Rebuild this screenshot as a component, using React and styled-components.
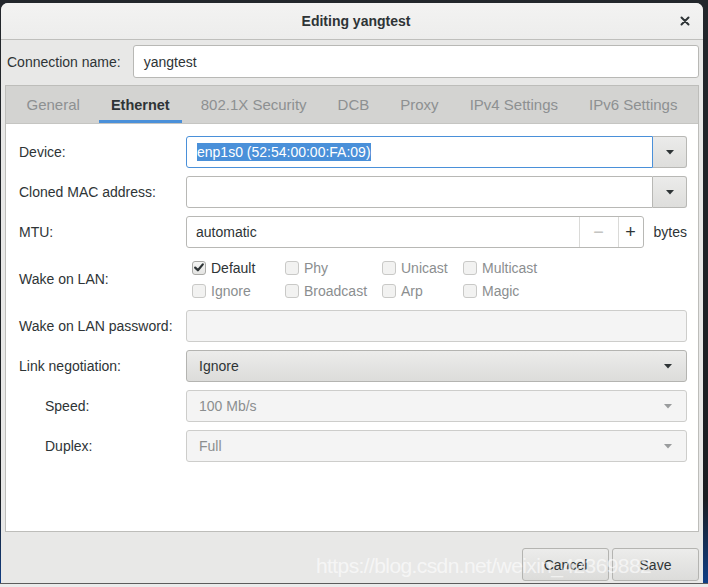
import React from "react";
import styled, { createGlobalStyle } from "styled-components";

const GlobalStyle = createGlobalStyle`
  html, body {
    margin: 0;
    padding: 0;
    background: #1d2126;
    font-family: "Liberation Sans", Arial, sans-serif;
    font-size: 14px;
    color: #2e3436;
  }
`;

const Desktop = styled.div`
  position: relative;
  width: 708px;
  height: 587px;
  overflow: hidden;
  display: flex;
  flex-direction: column;
  background: linear-gradient(180deg, #23272c 0%, #1b1e22 85%, #0f3f8a 100%);
`;

const Window = styled.div`
  margin: 3px 5px 0 1px;
  height: 580px;
  display: flex;
  flex-direction: column;
  background: #e8e8e7;
  border-radius: 7px 7px 0 0;
  overflow: hidden;
`;

const BottomStrip = styled.div`
  flex: 1;
  background: #ebebeb;
  border-top: 1px solid #5c5c5c;
`;

const HeaderBar = styled.div`
  height: 36px;
  flex: none;
  display: flex;
  align-items: center;
  justify-content: center;
  position: relative;
  background: linear-gradient(#f3f3f2, #ededec);
  border-bottom: 1px solid #bfbfbc;
`;

const Title = styled.div`
  font-weight: bold;
  font-size: 14px;
  color: #2e3436;
  margin-left: 8px;
`;

const CloseButton = styled.div`
  position: absolute;
  right: 13px;
  top: 13px;
  width: 10px;
  height: 10px;
  display: flex;
`;

const Body = styled.div`
  flex: 1;
  display: flex;
  flex-direction: column;
  padding: 5px 4px 0 4px;
`;

const NameRow = styled.div`
  display: flex;
  align-items: center;
  gap: 12px;
  padding-left: 2px;
`;

const Entry = styled.div`
  flex: 1;
  height: ${(p) => p.$h || 32}px;
  display: flex;
  align-items: center;
  padding: 0 10px;
  box-sizing: border-box;
  background: ${(p) => (p.$disabled ? "#f4f4f4" : "#ffffff")};
  border: 1px solid ${(p) => (p.$focus ? "#4a90d9" : p.$disabled ? "#cdcdcb" : "#b8b8b5")};
  border-radius: ${(p) => (p.$joined ? "3px 0 0 3px" : "3px")};
  color: ${(p) => (p.$disabled ? "#8b8e8f" : "#2e3436")};
  white-space: nowrap;
  min-width: 0;
`;

const Notebook = styled.div`
  margin-top: 7px;
  height: 445px;
  display: flex;
  flex-direction: column;
  border: 1px solid #bdbdba;
  background: #ffffff;
`;

const TabStrip = styled.div`
  height: 37px;
  flex: none;
  display: flex;
  padding-left: 5px;
  background: #d3d3d1;
  border-bottom: 1px solid #c5c5c2;
`;

const Tab = styled.div`
  margin: 0 3.5px;
  padding: 0 12px;
  display: flex;
  align-items: center;
  font-size: ${(p) => (p.$active ? "14.5px" : "15px")};
  color: ${(p) => (p.$active ? "#2e3436" : "#8d9091")};
  font-weight: ${(p) => (p.$active ? "bold" : "normal")};
  box-shadow: ${(p) => (p.$active ? "inset 0 -3px 0 #4a90d9" : "none")};
  white-space: nowrap;
`;

const Form = styled.div`
  display: grid;
  grid-template-columns: 167px 1fr;
  row-gap: 8px;
  padding: 12px 11px 0 13px;
  align-items: center;
`;

const Label = styled.div`
  color: #2e3436;
  padding-left: ${(p) => (p.$indent ? "26px" : "0")};
  white-space: nowrap;
`;

const Combo = styled.div`
  display: flex;
  height: 32px;
`;

const ComboButton = styled.div`
  width: 34px;
  flex: none;
  display: flex;
  align-items: center;
  justify-content: center;
  box-sizing: border-box;
  border: 1px solid #b8b8b5;
  border-left: none;
  border-radius: 0 3px 3px 0;
  background: linear-gradient(#ebebea, #dededc);
`;

const Arrow = ({ color = "#2e3436" }) => (
  <svg width="10" height="6" viewBox="0 0 10 6">
    <path d="M1 1 L9 1 L5 5.5 Z" fill={color} />
  </svg>
);

const SpinRow = styled.div`
  display: flex;
  align-items: center;
  height: 32px;
`;

const SpinBox = styled.div`
  flex: 1;
  display: flex;
  height: 32px;
  box-sizing: border-box;
  border: 1px solid #b8b8b5;
  border-radius: 3px;
  background: #fff;
`;

const SpinText = styled.div`
  flex: 1;
  display: flex;
  align-items: center;
  padding: 0 9px;
`;

const SpinBtn = styled.div`
  width: ${(p) => p.$w}px;
  display: flex;
  align-items: center;
  justify-content: center;
  border-left: 1px solid #dadad8;
  color: ${(p) => (p.$disabled ? "#c4c4c2" : "#2e3436")};
  font-size: 18px;
`;

const Unit = styled.div`
  margin-left: 10px;
  color: #2e3436;
`;

const ChecksGrid = styled.div`
  display: grid;
  grid-template-columns: 93px 97px 81px auto;
  grid-auto-rows: 23px;
  padding-left: 6px;
  align-items: center;
`;

const Check = styled.div`
  display: flex;
  align-items: center;
  gap: 5px;
  color: ${(p) => (p.$disabled ? "#8b8e8f" : "#2e3436")};
  white-space: nowrap;
`;

const Box = styled.div`
  width: 14px;
  height: 14px;
  box-sizing: border-box;
  border: 1px solid ${(p) => (p.$disabled ? "#c9c9c7" : "#a9a9a6")};
  border-radius: 3px;
  background: ${(p) => (p.$disabled ? "#f2f2f1" : "linear-gradient(#f5f5f4, #e4e4e2)")};
  display: flex;
  align-items: center;
  justify-content: center;
`;

const SelectButton = styled.div`
  height: 32px;
  box-sizing: border-box;
  display: flex;
  align-items: center;
  justify-content: space-between;
  padding: 0 13px 0 12px;
  border: 1px solid ${(p) => (p.$disabled ? "#cdcdcb" : "#b4b4b1")};
  border-radius: 3px;
  background: ${(p) =>
    p.$disabled ? "#f4f4f4" : "linear-gradient(#ececeb, #dcdcda)"};
  color: ${(p) => (p.$disabled ? "#8b8e8f" : "#2e3436")};
`;

const Selected = styled.span`
  background: #4a90d9;
  color: #fff;
  padding: 1px 0;
`;

const ActionRow = styled.div`
  display: flex;
  justify-content: flex-end;
  gap: 3px;
  padding: 16px 0 0 0;
`;

const Button = styled.div`
  width: 87px;
  height: 33px;
  box-sizing: border-box;
  display: flex;
  align-items: center;
  justify-content: center;
  border: 1px solid #b4b4b1;
  border-radius: 3px;
  background: linear-gradient(#ececeb, #dcdcda);
  color: #2e3436;
`;

const Watermark = styled.div`
  position: absolute;
  left: 316px;
  top: 554px;
  font-family: "Liberation Sans Narrow", "Liberation Sans", sans-serif;
  font-size: 21px;
  letter-spacing: -0.6px;
  color: rgba(255, 255, 255, 0.62);
  white-space: nowrap;
  pointer-events: none;
`;

const tabs = [
  "General",
  "Ethernet",
  "802.1X Security",
  "DCB",
  "Proxy",
  "IPv4 Settings",
  "IPv6 Settings",
];

const wol = [
  { name: "Default", checked: true },
  { name: "Phy" },
  { name: "Unicast" },
  { name: "Multicast" },
  { name: "Ignore" },
  { name: "Broadcast" },
  { name: "Arp" },
  { name: "Magic" },
];

const CheckMark = () => (
  <svg width="10" height="9" viewBox="0 0 10 9">
    <path
      d="M1.2 4.6 L3.9 7.3 L8.8 1.4"
      fill="none"
      stroke="#2e3436"
      strokeWidth="2.2"
      strokeLinecap="round"
      strokeLinejoin="round"
    />
  </svg>
);

export default function App() {
  return (
    <>
      <GlobalStyle />
      <Desktop>
        <Window>
          <HeaderBar>
            <Title>Editing yangtest</Title>
            <CloseButton>
              <svg width="10" height="10" viewBox="0 0 10 10">
                <path
                  d="M1.5 1.5 L8.5 8.5 M8.5 1.5 L1.5 8.5"
                  stroke="#2e3436"
                  strokeWidth="2"
                  strokeLinecap="round"
                />
              </svg>
            </CloseButton>
          </HeaderBar>
          <Body>
            <NameRow>
              <Label>Connection name:</Label>
              <Entry $h={33}>yangtest</Entry>
            </NameRow>
            <Notebook>
              <TabStrip>
                {tabs.map((t) => (
                  <Tab key={t} $active={t === "Ethernet"}>
                    {t}
                  </Tab>
                ))}
              </TabStrip>
              <Form>
                <Label>Device:</Label>
                <Combo>
                  <Entry $focus $joined>
                    <Selected>enp1s0 (52:54:00:00:FA:09)</Selected>
                  </Entry>
                  <ComboButton>
                    <Arrow />
                  </ComboButton>
                </Combo>

                <Label>Cloned MAC address:</Label>
                <Combo>
                  <Entry $joined />
                  <ComboButton>
                    <Arrow />
                  </ComboButton>
                </Combo>

                <Label>MTU:</Label>
                <SpinRow>
                  <SpinBox>
                    <SpinText>automatic</SpinText>
                    <SpinBtn $w={38} $disabled>
                      −
                    </SpinBtn>
                    <SpinBtn $w={24}>+</SpinBtn>
                  </SpinBox>
                  <Unit>bytes</Unit>
                </SpinRow>

                <Label>Wake on LAN:</Label>
                <ChecksGrid>
                  {wol.map((w) => (
                    <Check key={w.name} $disabled={!w.checked}>
                      <Box $disabled={!w.checked}>{w.checked && <CheckMark />}</Box>
                      {w.name}
                    </Check>
                  ))}
                </ChecksGrid>

                <Label>Wake on LAN password:</Label>
                <Entry $disabled />

                <Label>Link negotiation:</Label>
                <SelectButton>
                  Ignore
                  <Arrow />
                </SelectButton>

                <Label $indent>Speed:</Label>
                <SelectButton $disabled>
                  100 Mb/s
                  <Arrow color="#9a9c9d" />
                </SelectButton>

                <Label $indent>Duplex:</Label>
                <SelectButton $disabled>
                  Full
                  <Arrow color="#9a9c9d" />
                </SelectButton>
              </Form>
            </Notebook>
            <ActionRow>
              <Button>Cancel</Button>
              <Button>Save</Button>
            </ActionRow>
          </Body>
        </Window>
        <BottomStrip />
        <Watermark>https://blog.csdn.net/weixin_42369882</Watermark>
      </Desktop>
    </>
  );
}
